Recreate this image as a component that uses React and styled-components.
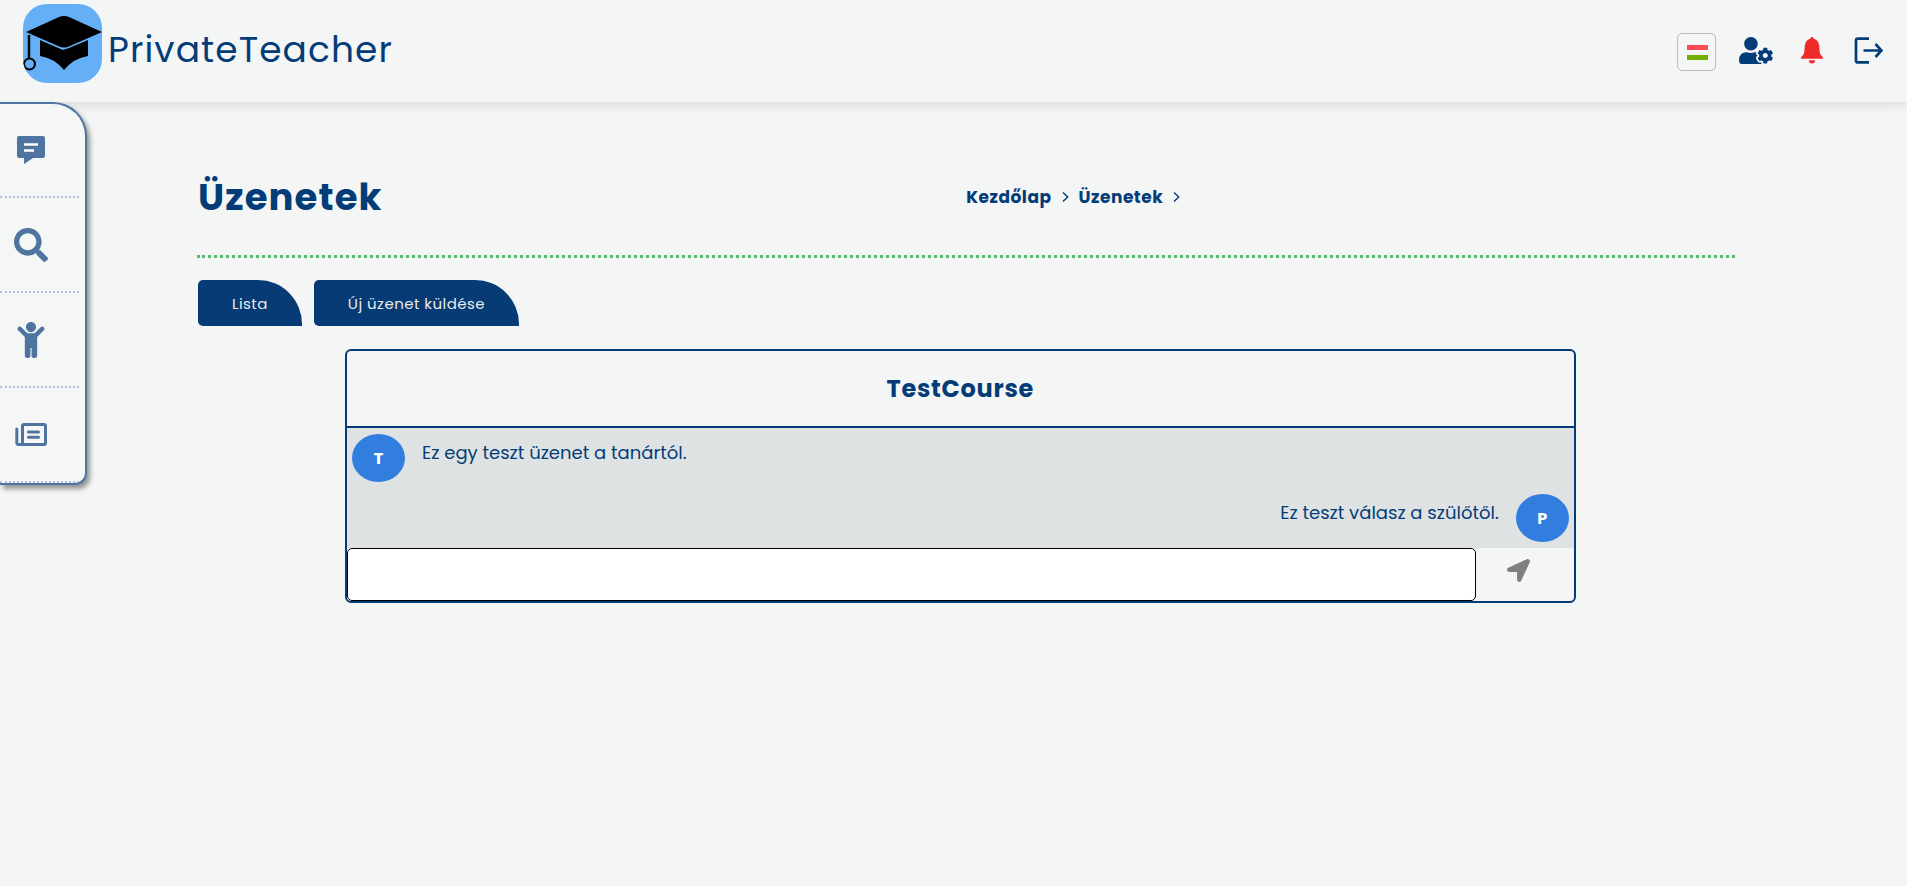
import React from "react";
import styled, { createGlobalStyle } from "styled-components";
import { FaUserCog, FaSearch, FaChild, FaLocationArrow } from "react-icons/fa";

const navy = "#043c78";
const steel = "#4f749f";
const pale = "#f4f6f6";
const tracking = "0.03em";

const GlobalStyle = createGlobalStyle`
  * { box-sizing: border-box; }
  body {
    margin: 0;
    min-height: 100vh;
    background: ${pale};
    color: ${navy};
    font-family: Poppins, Inter, "Open Sans", sans-serif;
  }
  a { color: inherit; text-decoration: none; }
  button { font: inherit; cursor: pointer; }
`;

const Header = styled.header`
  display: flex;
  align-items: flex-start;
  justify-content: space-between;
  height: 102px;
  padding: 4px 11px 0 23px;
  background: ${pale};
  box-shadow: 0 2px 12px rgba(0, 0, 0, 0.12);
`;

const Brand = styled.a`
  display: flex;
  align-items: center;
  gap: 6px;
  font-size: 36px;
  line-height: 48px;
  letter-spacing: ${tracking};
`;

const LogoBox = styled.svg`
  width: 79px;
  height: 79px;
  border-radius: 24px;
  background: #64aff5;
`;

const BrandName = styled.span`
  padding-top: 12px;
`;

const Actions = styled.nav`
  display: flex;
  align-items: center;
  height: 92px;
`;

const FlagButton = styled.button`
  display: grid;
  place-items: center;
  width: 39px;
  height: 38px;
  margin: 4px 12px 0 0;
  padding: 0 0 0 2px;
  border: 1px solid #bbbdbf;
  border-radius: 5px;
  background: transparent;
`;

const IconButton = styled.button`
  display: grid;
  place-items: center;
  width: 56px;
  height: 48px;
  padding: 0;
  border: 0;
  background: transparent;
  color: ${(p) => p.$color || navy};

  svg {
    width: ${(p) => p.$width}px;
    height: 27px;
  }
`;

const Body = styled.div`
  display: flex;
  align-items: flex-start;
`;

const Sidebar = styled.nav`
  position: relative;
  flex: none;
  width: 87px;
  overflow: hidden;
  padding-right: 6px;
  border: 2px solid ${steel};
  border-left: 0;
  border-radius: 0 34px 12px 0;
  background: #f5f7f7;
  box-shadow: 3px 4px 5px rgba(0, 0, 0, 0.4);
`;

const SideLink = styled.a`
  display: flex;
  align-items: center;
  justify-content: center;
  height: 95px;
  padding-right: 18px;
  border-bottom: 2px dotted #b0c1da;
  color: ${steel};
  font-size: ${(p) => p.$size}px;

  &:first-child {
    height: 94px;
  }
`;

const Main = styled.main`
  flex: 1;
  min-width: 0;
  padding: 64px 9% 40px 110px;
`;

const TitleBar = styled.div`
  display: grid;
  grid-template-columns: 1fr 1fr;
  align-items: center;
  height: 92px;
  padding-bottom: 27px;
  border-bottom: 3px dotted #53bd72;
  letter-spacing: ${tracking};
`;

const Title = styled.h1`
  margin: 0;
  padding-left: 1px;
  font-size: 37px;
  line-height: 48px;
  font-weight: 700;
  letter-spacing: ${tracking};
`;

const Crumbs = styled.nav`
  display: flex;
  align-items: center;
  gap: 10px;
  font-size: 17px;
  line-height: 24px;
  font-weight: 700;
  letter-spacing: ${tracking};
`;

const Tabs = styled.div`
  display: flex;
  gap: 12px;
  padding: 22px 0 0 1px;
`;

const Tab = styled.button`
  height: 46px;
  padding: 2px 34px 0;
  border: 0;
  border-radius: 5px 44px 0 5px;
  background: #063b75;
  color: #e9ecec;
  font-size: 15px;
  line-height: 24px;
  letter-spacing: ${tracking};
`;

const Card = styled.section`
  width: 80%;
  margin: 23px 0 0 148px;
  overflow: hidden;
  border: 2px solid ${navy};
  border-radius: 6px;
`;

const CardTitle = styled.h2`
  margin: 0;
  padding: 22px 0 21px;
  border-bottom: 2px solid ${navy};
  font-size: 24px;
  line-height: 32px;
  font-weight: 700;
  letter-spacing: ${tracking};
  text-align: center;
`;

const Thread = styled.div`
  background: #dee2e3;
`;

const Message = styled.div`
  display: flex;
  flex-direction: ${(p) => (p.$own ? "row-reverse" : "row")};
  gap: 17px;
  height: 60px;
  padding: 6px 5px;
`;

const Avatar = styled.span`
  display: grid;
  place-items: center;
  width: 53px;
  height: 48px;
  border-radius: 50%;
  background: #317ede;
  color: #fff;
  font-size: 16px;
  font-weight: 700;
`;

const MessageText = styled.p`
  margin: 0;
  padding-top: 6px;
  font-size: 18px;
  line-height: 26px;
`;

const Composer = styled.form`
  display: flex;
`;

const MessageInput = styled.input`
  width: 92%;
  height: 53px;
  padding: 0 12px;
  border: 1px solid #000;
  border-radius: 5px;
  background: #fff;
  color: ${navy};
  font: inherit;
`;

const SendButton = styled.button`
  flex: 1;
  display: flex;
  justify-content: center;
  padding: 11px 12px 0 0;
  border: 0;
  background: transparent;
  color: #808080;
  font-size: 23px;
`;

function Logo() {
  return (
    <LogoBox viewBox="0 0 79 79" aria-hidden="true">
      <path d="M17 36 L40 46 L65 36 V52 Q51 54 41 66 Q31 54 17 52 Z" fill="#000" />
      <path
        d="M3 28 L36 13 Q41 11 46 13 L79 28 L47 42 Q41 45 35 42 Z"
        fill="#000"
        stroke="#64aff5"
        strokeWidth="3"
        paintOrder="stroke"
      />
      <path d="M6 31 V54" stroke="#000" strokeWidth="2.4" />
      <circle cx="6.5" cy="60" r="5.5" fill="none" stroke="#000" strokeWidth="2" />
    </LogoBox>
  );
}

function Flag() {
  return (
    <svg width="21" height="15" viewBox="0 0 21 15" aria-hidden="true">
      <rect width="21" height="15" fill="#f5f5f5" />
      <rect width="21" height="5" fill="#ff4b55" />
      <rect y="10" width="21" height="5" fill="#73af00" />
    </svg>
  );
}

function BellIcon() {
  return (
    <svg viewBox="0 0 22 27" fill="currentColor" aria-hidden="true">
      <path d="M11 0Q12.6 0 12.8 1.7Q18 3.4 18.2 9Q18.4 16.5 20 18.3Q22 19.6 22 21V21.8H0V21Q0 19.6 2 18.3Q3.6 16.5 3.8 9Q4 3.4 9.2 1.7Q9.4 0 11 0Z" />
      <path d="M7.8 23.3H14.2Q13.7 26.6 11 26.6Q8.3 26.6 7.8 23.3Z" />
    </svg>
  );
}

function LogOutIcon() {
  return (
    <svg viewBox="0 0 29 27" fill="none" stroke="currentColor" strokeWidth="2.7" aria-hidden="true">
      <path d="M15 1.6H4Q2 1.6 2 3.6V23.4Q2 25.4 4 25.4H15" />
      <path d="M9.5 13.5H27M21.5 7L27.5 13.5L21.5 20" />
    </svg>
  );
}

function NoteIcon() {
  return (
    <svg width="28" height="28" viewBox="0 0 28 28" aria-hidden="true">
      <path d="M2 0H26Q28 0 28 2V20Q28 22 26 22H16L7 28V22H2Q0 22 0 20V2Q0 0 2 0Z" fill="currentColor" />
      <path d="M7 8.5H21M7 14.5H17" stroke="#fff" strokeWidth="2.6" />
    </svg>
  );
}

function NewsIcon() {
  return (
    <svg width="32" height="23" viewBox="0 0 32 23" fill="none" stroke="currentColor" strokeWidth="3" strokeLinecap="round" aria-hidden="true">
      <rect x="7.5" y="1.5" width="23" height="20" rx="1.5" />
      <path d="M1.8 6V19.5Q1.8 21.5 4 21.5H8" />
      <path d="M13.5 9H23.5M13.5 14.3H23.5" />
    </svg>
  );
}

function Chevron() {
  return (
    <svg width="7" height="12" viewBox="0 0 7 12" fill="none" stroke="currentColor" strokeWidth="1.4" aria-hidden="true">
      <path d="M1 1.5L5.7 6L1 10.5" />
    </svg>
  );
}

export default function App() {
  return (
    <>
      <GlobalStyle />
      <Header>
        <Brand href="#home">
          <Logo />
          <BrandName>PrivateTeacher</BrandName>
        </Brand>
        <Actions aria-label="Fiók">
          <FlagButton type="button" aria-label="Magyar"><Flag /></FlagButton>
          <IconButton type="button" aria-label="Profil" $width={34}><FaUserCog /></IconButton>
          <IconButton type="button" aria-label="Értesítések" $width={22} $color="#ee2a2a"><BellIcon /></IconButton>
          <IconButton type="button" aria-label="Kijelentkezés" $width={29}><LogOutIcon /></IconButton>
        </Actions>
      </Header>
      <Body>
        <Sidebar aria-label="Menü">
          <SideLink href="#messages" aria-label="Üzenetek" $size={28}><NoteIcon /></SideLink>
          <SideLink href="#search" aria-label="Keresés" $size={34}><FaSearch /></SideLink>
          <SideLink href="#children" aria-label="Gyermekek" $size={36}><FaChild /></SideLink>
          <SideLink href="#news" aria-label="Hírek" $size={32}><NewsIcon /></SideLink>
        </Sidebar>
        <Main>
          <TitleBar>
            <Title>Üzenetek</Title>
            <Crumbs aria-label="Útvonal">
              <a href="#home">Kezdőlap</a>
              <Chevron />
              <a href="#messages">Üzenetek</a>
              <Chevron />
            </Crumbs>
          </TitleBar>
          <Tabs>
            <Tab type="button">Lista</Tab>
            <Tab type="button">Új üzenet küldése</Tab>
          </Tabs>
          <Card>
            <CardTitle>TestCourse</CardTitle>
            <Thread>
              <Message>
                <Avatar>T</Avatar>
                <MessageText>Ez egy teszt üzenet a tanártól.</MessageText>
              </Message>
              <Message $own>
                <Avatar>P</Avatar>
                <MessageText>Ez teszt válasz a szülőtől.</MessageText>
              </Message>
            </Thread>
            <Composer onSubmit={(e) => e.preventDefault()}>
              <MessageInput type="text" aria-label="Üzenet" />
              <SendButton type="submit" aria-label="Küldés"><FaLocationArrow /></SendButton>
            </Composer>
          </Card>
        </Main>
      </Body>
    </>
  );
}
